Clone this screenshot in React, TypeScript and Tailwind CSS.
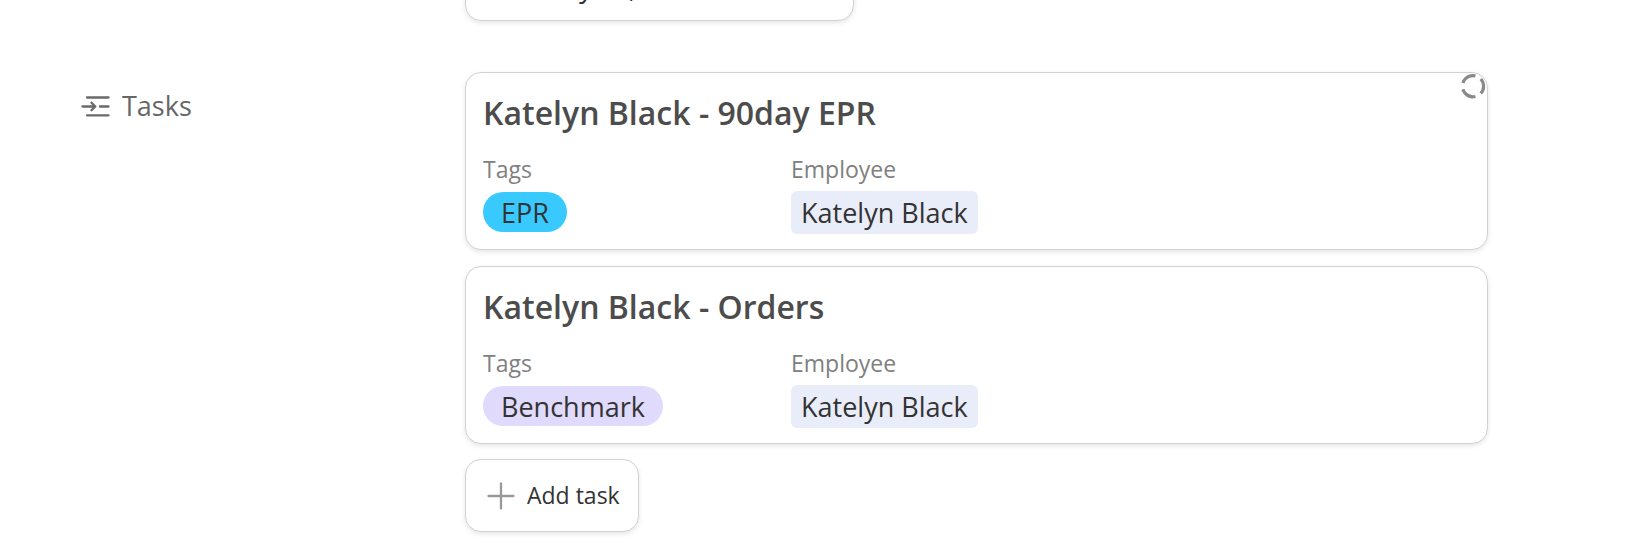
type Task = { title: string; tag: string; tagClass: string; employee: string; loading?: boolean };

const tasks: Task[] = [
  { title: 'Katelyn Black - 90day EPR', tag: 'EPR', tagClass: 'bg-[#38caff]', employee: 'Katelyn Black', loading: true },
  { title: 'Katelyn Black - Orders', tag: 'Benchmark', tagClass: 'bg-[#e0dafd]', employee: 'Katelyn Black' },
];

const surface = 'rounded-2xl border border-[#d2d2d2] bg-white shadow-[0_2px_5px_rgba(0,0,0,0.1)]';

function LinkedRecordsIcon() {
  return (
    <svg className="h-8 w-8 shrink-0" viewBox="0 0 32 32" fill="none" stroke="#6a6a6a" strokeWidth="2.3" strokeLinecap="round" strokeLinejoin="round" aria-hidden="true">
      <path d="M7 6.5h21.5M20 15.5h8.5M7 24.3h21.5M2.5 15.5H15M11.5 11.7l3.8 3.8-3.8 3.8" />
    </svg>
  );
}

function Spinner() {
  return (
    <svg className="absolute top-0 right-0 h-7 w-7" viewBox="0 0 28 28" fill="none" stroke="#8a8a8a" strokeWidth="3.2" role="img" aria-label="Loading">
      <circle cx="14" cy="13.2" r="10.6" pathLength="360" strokeDasharray="86 34" transform="rotate(-43 14 13.2)" />
    </svg>
  );
}

function TaskCard({ task }: { task: Task }) {
  return (
    <article className={`relative ${surface} px-[17px] pt-5 pb-[15px]`}>
      <h2 className="text-[32px] leading-10 font-semibold text-[#4c4c4c]">{task.title}</h2>
      <dl className="mt-5 flex text-[#808080]">
        <div className="w-[308px]">
          <dt className="text-[23px] leading-8">Tags</dt>
          <dd className="mt-[7px] flex">
            <span className={`rounded-full px-[18px] pt-px text-[27px] leading-[39px] text-[#333] ${task.tagClass}`}>{task.tag}</span>
          </dd>
        </div>
        <div>
          <dt className="text-[23px] leading-8">Employee</dt>
          <dd className="mt-1.5 flex">
            <span className="rounded-md bg-[#e9edf9] px-2.5 text-[27px] leading-[43px] text-[#333]">{task.employee}</span>
          </dd>
        </div>
      </dl>
      {task.loading && <Spinner />}
    </article>
  );
}

export default function App() {
  return (
    <main className="overflow-hidden bg-white pr-[146px] pb-7 pl-20 font-['Open_Sans','Noto_Sans',sans-serif]">
      <div className="flex h-[21px] items-end pl-[385px]">
        <div className={`${surface} w-[389px] shrink-0 px-[17px] pb-4 text-[28px] leading-9 text-[#333]`}>
          <span className="pl-24">y</span>
          <span className="pl-9">,</span>
        </div>
      </div>
      <section className="mt-[51px] flex" aria-labelledby="tasks-label">
        <div className="flex w-[385px] shrink-0 items-start gap-2.5 pt-[15px] text-[#666]">
          <div className="flex h-10 items-center"><LinkedRecordsIcon /></div>
          <span id="tasks-label" className="text-[27px] leading-[38px]">Tasks</span>
        </div>
        <div className="flex min-w-0 flex-1 flex-col gap-4">
          {tasks.map((task) => <TaskCard key={task.title} task={task} />)}
          <button type="button" className={`${surface} -mt-px flex h-[73px] items-center gap-3 self-start pr-[18px] pl-[21px] text-[23px] text-[#333]`}>
            <svg className="h-7 w-7" viewBox="0 0 28 28" stroke="#999" strokeWidth="2.3" strokeLinecap="round" aria-hidden="true"><path d="M1.5 14h25M14 1.5v25" /></svg>
            Add task
          </button>
        </div>
      </section>
    </main>
  );
}
